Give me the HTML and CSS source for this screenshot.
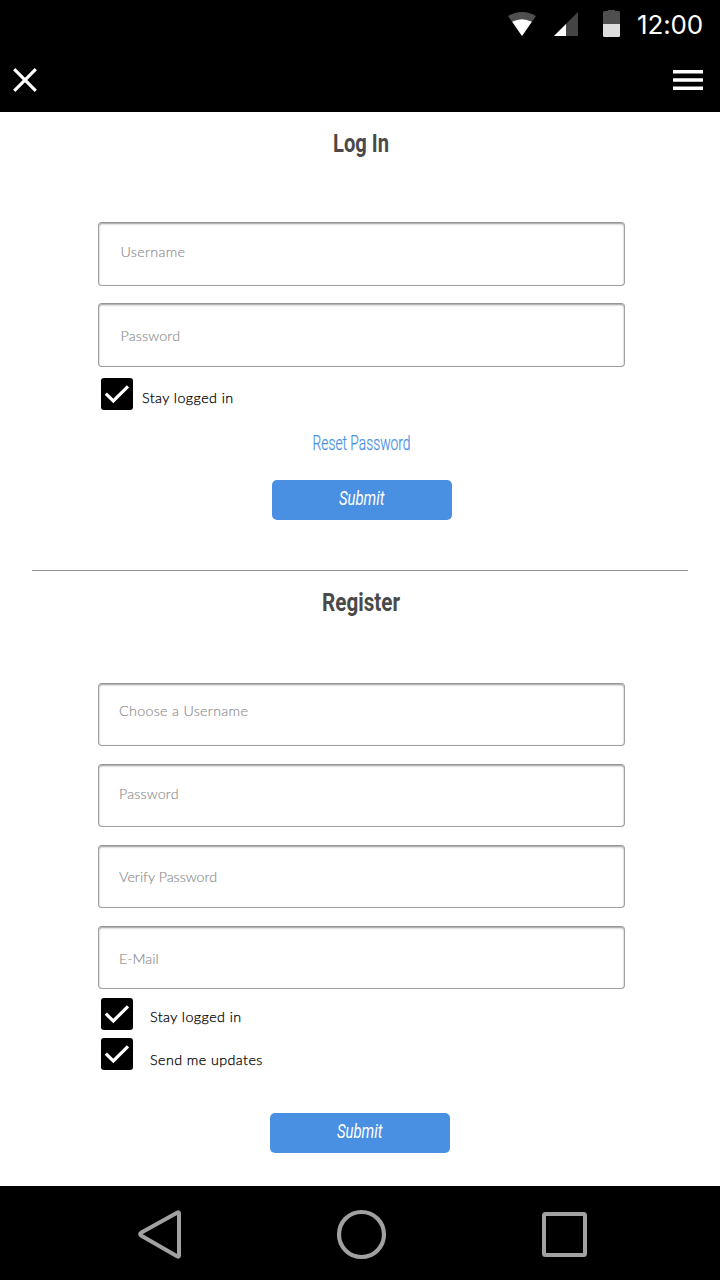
FILE: index.html
```html
<!DOCTYPE html>
<html lang="en">
<head>
<meta charset="utf-8">
<title>Log In</title>
<link rel="stylesheet" href="styles.css">
</head>
<body>
<div class="screen">
  <header class="top">
    <div class="status">
      <svg class="wifi" width="28" height="24" viewBox="0 0 28 24"><path d="M0 4Q14-4 28 4L14 24Z" fill="#4f4f4f"/><path d="M4.200 9.800Q14 4.600 23.800 9.800L14 24Z" fill="#fff"/></svg>
      <svg class="signal" width="24" height="24" viewBox="0 0 24 24"><path d="M24 0V24H0Z" fill="#444"/><path d="M12 12V24H0Z" fill="#fff"/></svg>
      <svg class="battery" width="17" height="27" viewBox="0 0 17 27"><path d="M0 2.500Q0 1 1.500 1H5V0H12V1H15.500Q17 1 17 2.500V14H0Z" fill="#4f4f4f"/><path d="M0 14H17V25.500Q17 27 15.500 27H1.500Q0 27 0 25.500Z" fill="#dedede"/></svg>
      <span class="clock">12:00</span>
    </div>
    <div class="toolbar">
      <svg width="24" height="24" viewBox="0 0 24 24"><path d="M1.200 1.200L22.800 22.800M22.800 1.200L1.200 22.800" stroke="#fff" stroke-width="3.200"/></svg>
      <svg width="30" height="20" viewBox="0 0 30 20"><path d="M0 0H30V3.400H0ZM0 8.300H30V11.700H0ZM0 16.600H30V20H0Z" fill="#fff"/></svg>
    </div>
  </header>

  <main class="content">
    <section class="login">
      <svg class="title" width="120" height="40"><text x="33" y="30" textLength="56" lengthAdjust="spacingAndGlyphs">Log In</text></svg>
      <div class="fields">
        <div class="field"><span class="hint h-user">Username</span></div>
        <div class="field"><span class="hint h-pass">Password</span></div>
      </div>
      <div class="check">
        <svg class="box" width="32" height="32" viewBox="0 0 32 32"><rect width="32" height="32" rx="3"/><path d="M4.800 15.700L12.300 23L27 8.300" fill="none" stroke="#fff" stroke-width="3.200"/></svg>
        <span class="label near">Stay logged in</span>
      </div>
      <svg class="reset" width="160" height="30"><text x="30.500" y="22" textLength="98" lengthAdjust="spacingAndGlyphs">Reset Password</text></svg>
      <div class="button"><svg width="180" height="40"><text x="67" y="25" textLength="45.500" lengthAdjust="spacingAndGlyphs">Submit</text></svg></div>
    </section>

    <section class="register">
      <svg class="title" width="120" height="40"><text x="21" y="30" textLength="78" lengthAdjust="spacingAndGlyphs">Register</text></svg>
      <div class="fields">
        <div class="field"><span class="hint h-choose">Choose a Username</span></div>
        <div class="field"><span class="hint h-new">Password</span></div>
        <div class="field"><span class="hint h-verify">Verify Password</span></div>
        <div class="field"><span class="hint h-mail">E-Mail</span></div>
      </div>
      <div class="check">
        <svg class="box" width="32" height="32" viewBox="0 0 32 32"><rect width="32" height="32" rx="3"/><path d="M4.800 15.700L12.300 23L27 8.300" fill="none" stroke="#fff" stroke-width="3.200"/></svg>
        <span class="label">Stay logged in</span>
      </div>
      <div class="check">
        <svg class="box" width="32" height="32" viewBox="0 0 32 32"><rect width="32" height="32" rx="3"/><path d="M4.800 15.700L12.300 23L27 8.300" fill="none" stroke="#fff" stroke-width="3.200"/></svg>
        <span class="label low">Send me updates</span>
      </div>
      <div class="button"><svg width="180" height="40"><text x="67" y="25" textLength="45.500" lengthAdjust="spacingAndGlyphs">Submit</text></svg></div>
    </section>
  </main>

  <nav class="nav">
    <svg class="back" width="43" height="50" viewBox="0 0 43 50"><path d="M39.500 2.500Q41 1.900 41 3.500V45.500Q41 47.100 39.500 46.500L3 25.500Q1.200 24 3 22.800Z" fill="none" stroke="#a1a1a1" stroke-width="4" stroke-linejoin="round"/></svg>
    <svg class="home" width="50" height="50" viewBox="0 0 50 50"><circle cx="25.500" cy="24.500" r="22.500" fill="none" stroke="#a1a1a1" stroke-width="4.200"/></svg>
    <svg class="recent" width="45" height="45" viewBox="0 0 45 45"><rect x="2" y="2" width="41" height="41" rx="1.500" fill="none" stroke="#a1a1a1" stroke-width="4"/></svg>
  </nav>
</div>
</body>
</html>
```
FILE: styles.css
```css
* { box-sizing: border-box; }
body { margin: 0; background: #fff; font-family: Lato, sans-serif; }
svg { display: block; flex: none; overflow: visible; }
.screen { width: 720px; height: 1280px; display: flex; flex-direction: column; background: #fff; overflow: hidden; }

.top { height: 112px; background: #000; flex: none; }
.status { height: 50px; display: flex; align-items: flex-start; padding: 12px 0 0 508px; }
.signal { margin-left: 18px; }
.battery { margin: -2px 0 0 25px; }
.clock { margin: -3px 0 0 17px; color: #fff; font: 26px/32px Inter, sans-serif; letter-spacing: -.15px; white-space: nowrap; }
.toolbar { height: 60px; display: flex; align-items: center; justify-content: space-between; padding: 0 17px 0 13px; }

.content { height: 1074px; flex: none; }
.login { height: 459px; margin: 0 32px; border-bottom: 1px solid #949494; padding: 10px 65px 0; }
.register { padding: 10px 97px 0; }
.title { font: 700 26.500px Roboto, sans-serif; fill: #4a4a4a; }
.login .title { margin-left: 203px; }
.register .title { margin-left: 204px; }

.fields { display: flex; flex-direction: column; gap: 17px; padding-top: 60px; }
.register .fields { gap: 18px; padding-top: 62px; }
.field { width: 527.500px; height: 64px; margin-left: .5px; padding-left: 22px; border: 1px solid #a0a0a0; border-top-color: #969696; border-radius: 4px; background: #fff; box-shadow: inset 0 1px 2px rgba(0, 0, 0, .4); }
.register .field { height: 63px; padding-left: 20.500px; }
.hint { display: block; color: #8c8c8c; font-size: 14.300px; line-height: 20px; font-weight: 300; letter-spacing: .3px; -webkit-text-stroke: .15px #8c8c8c; }
.h-user { padding-top: 19px; }
.h-pass { padding-top: 22px; letter-spacing: .15px; }
.h-choose { padding-top: 17px; }
.h-new { padding-top: 19px; letter-spacing: .15px; }
.h-verify { padding-top: 21px; letter-spacing: 0; }
.h-mail { padding-top: 22px; letter-spacing: 0; }

.check { display: flex; align-items: flex-start; padding-left: 4px; margin-top: 9px; height: 32px; }
.check + .check { margin-top: 8px; }
.login .check { margin-top: 11px; }
.label { color: #000; font-size: 14.300px; line-height: 20px; font-weight: 300; letter-spacing: .43px; margin: 9px 0 0 17px; -webkit-text-stroke: .25px #000; }
.label.near { margin-top: 10px; margin-left: 9px; }
.label.low { margin-top: 12px; }

.reset { margin: 18px 0 0 185px; font: 300 20.500px Roboto, sans-serif; fill: #4a90e2; stroke: #4a90e2; stroke-width: .25px; }
.button { width: 180px; height: 40px; border-radius: 5px; background: #4a90e2; }
.button text { font: italic 400 20.500px Roboto, sans-serif; fill: #fff; }
.login .button { margin: 22px 0 0 175px; }
.register .button { margin: 43px 0 0 173px; }

.nav { height: 94px; flex: none; display: flex; align-items: center; background: #000; padding: 3px 0 0 138px; }
.home { margin-left: 155px; }
.recent { margin-left: 156px; }
```
